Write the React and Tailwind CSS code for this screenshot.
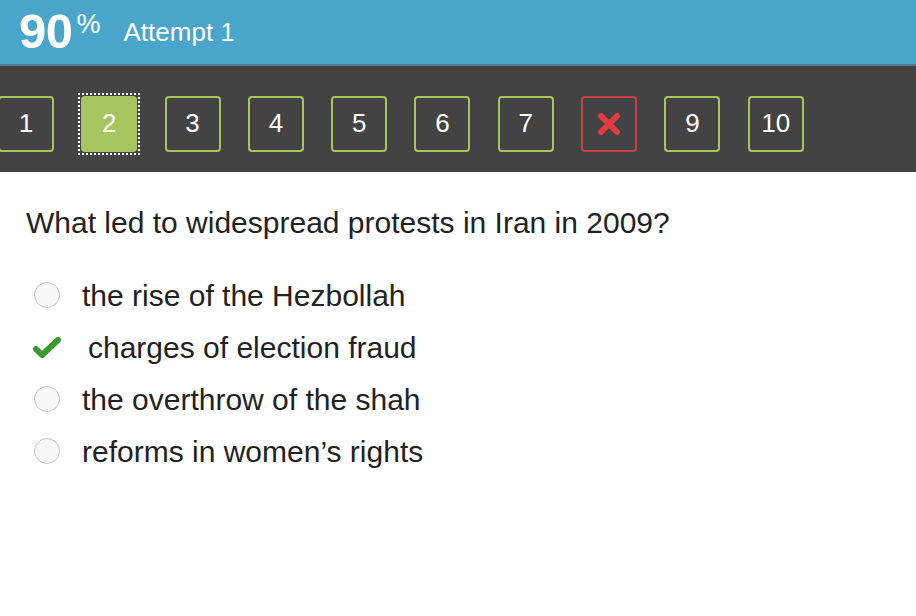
import { useState } from 'react';

const questions = ['1', '2', '3', '4', '5', '6', '7', 'x', '9', '10'];

const options = [
  { text: 'the rise of the Hezbollah' },
  { text: 'charges of election fraud', correct: true },
  { text: 'the overthrow of the shah' },
  { text: 'reforms in women\u2019s rights' },
];

function QuestionButton({ label, active }) {
  if (label === 'x') {
    return (
      <div className="w-[56px] h-[56px] rounded-[4px] border-2 border-[#c8414a] flex items-center justify-center">
        <svg width="26" height="26" viewBox="0 0 26 26">
          <path d="M5 5 L21 21 M21 5 L5 21" stroke="#e03c44" strokeWidth="6" strokeLinecap="round" />
        </svg>
      </div>
    );
  }
  if (active) {
    return (
      <div className="p-[1px] border-2 border-dotted border-white -m-[3px]">
        <div className="w-[56px] h-[56px] rounded-[4px] bg-[#a6c55f] flex items-center justify-center text-white text-[26px]">
          {label}
        </div>
      </div>
    );
  }
  return (
    <div className="w-[56px] h-[56px] rounded-[4px] border-2 border-[#a6c55f] flex items-center justify-center text-white text-[26px]">
      {label}
    </div>
  );
}

export default function App() {
  const [current] = useState(1);

  return (
    <div className="w-[916px] h-[616px] bg-white overflow-hidden" style={{ fontFamily: '"Liberation Sans", Arial, sans-serif' }}>
      {/* Header */}
      <div className="h-[66px] bg-[#4aa5ca] border-b-2 border-[#4f7d92] flex items-center pl-[19px]">
        <span className="text-white font-bold text-[49px] tracking-[-0.5px] leading-none mt-[-2px]">90</span>
        <span className="text-white text-[27px] leading-none self-start mt-[11px] ml-[4px]">%</span>
        <span className="text-white text-[26px] ml-[23px] leading-none">Attempt 1</span>
      </div>

      {/* Question nav */}
      <div className="h-[106px] bg-[#434343] flex items-center gap-[27.3px] pt-[9px] -ml-[2px]">
        {questions.map((q, i) => (
          <QuestionButton key={q} label={q} active={i === current} />
        ))}
      </div>

      {/* Question */}
      <div className="pt-[32px] pl-[26px] text-[#222]">
        <p className="text-[30px] leading-[38px]">What led to widespread protests in Iran in 2009?</p>
        <div className="mt-[34px] flex flex-col gap-[14px]">
          {options.map((o) => (
            <div key={o.text} className="flex items-center h-[38px]">
              <div className="w-[42px] flex justify-center">
                {o.correct ? (
                  <svg width="30" height="26" viewBox="0 0 30 26">
                    <path d="M4 15 L10 21 L26 6" stroke="#3a9a2e" strokeWidth="6" fill="none" strokeLinecap="round" strokeLinejoin="round" />
                  </svg>
                ) : (
                  <div className="w-[26px] h-[26px] rounded-full border border-[#c4c4c4] bg-[#f7f7f7]" />
                )}
              </div>
              <span className={`text-[30px] ${o.correct ? 'ml-[20px]' : 'ml-[14px]'}`}>{o.text}</span>
            </div>
          ))}
        </div>
      </div>
    </div>
  );
}
